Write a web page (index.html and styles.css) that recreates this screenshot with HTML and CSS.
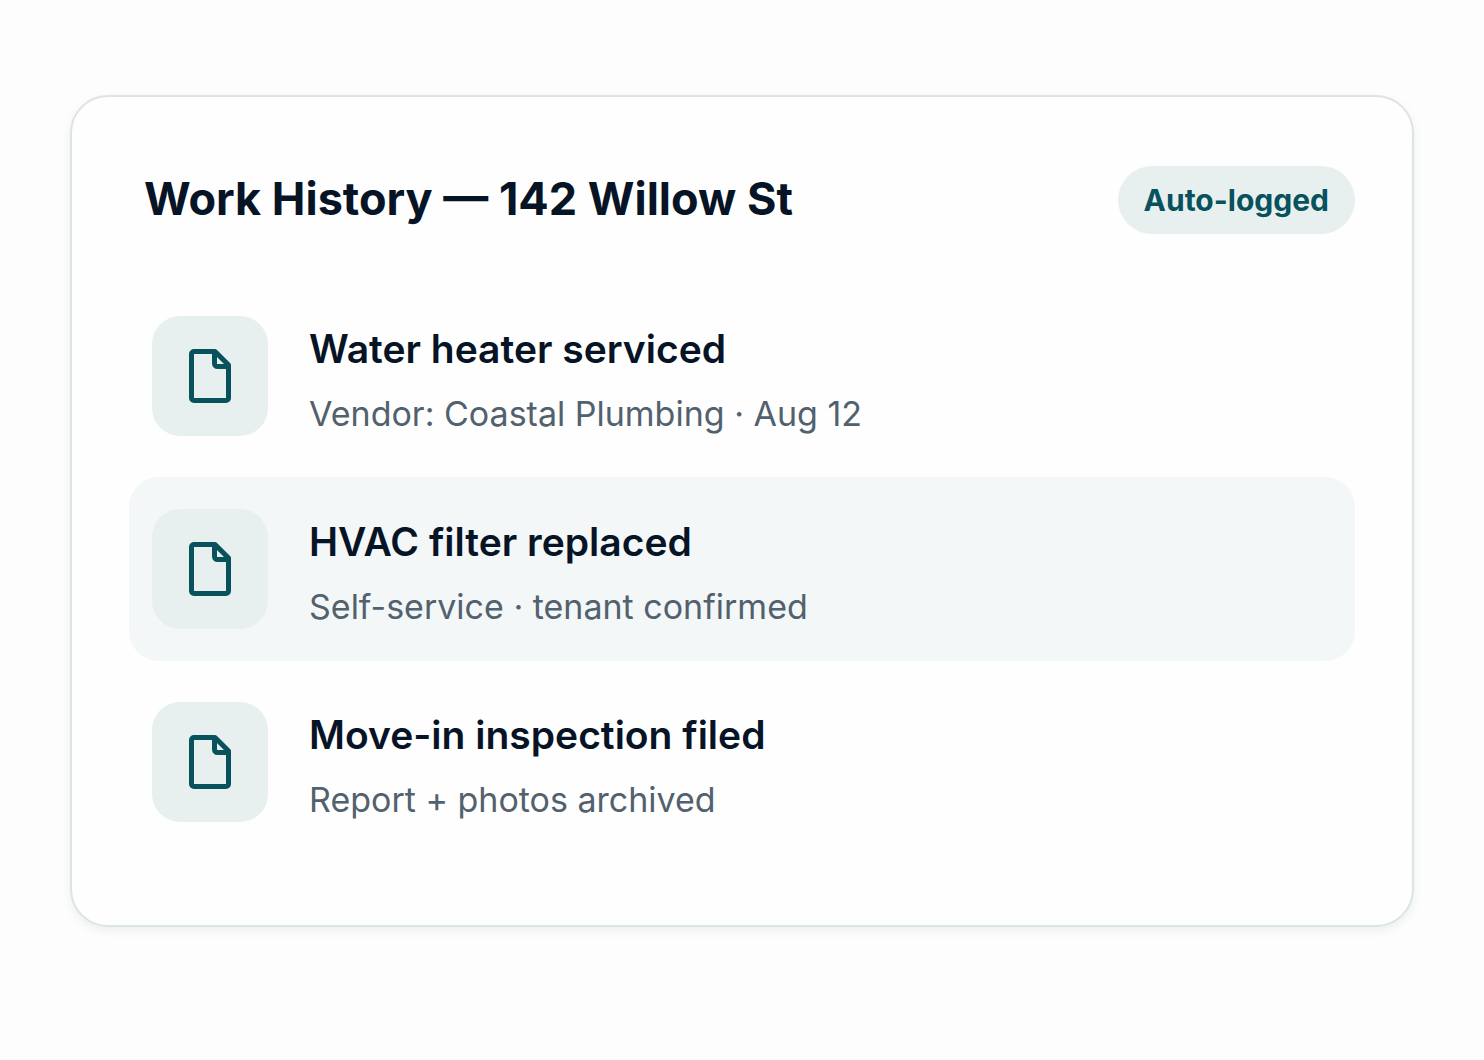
FILE: index.html
```html
<!DOCTYPE html>
<html lang="en">

<head>
    <meta charset="UTF-8">
    <meta name="viewport" content="width=device-width, initial-scale=1.0">
    <title>Work History</title>
    <link rel="stylesheet" href="styles.css">
</head>

<body>
    <!-- shared file icon -->
    <svg class="sprite" aria-hidden="true">
        <symbol id="icon-file" viewBox="0 0 42 54">
            <path d="M5 2.500H26L39.500 16V49A2.500 2.500 0 0 1 37 51.500H5A2.500 2.500 0 0 1 2.500 49V5A2.500 2.500 0 0 1 5 2.500Z" />
            <path d="M25.500 3V14.500A3 3 0 0 0 28.500 17.500H39" />
        </symbol>
    </svg>

    <main class="card">
        <header class="card-header">
            <h1 class="card-title">Work History — 142 Willow St</h1>
            <span class="badge">Auto-logged</span>
        </header>
        <ul class="history">
            <li class="history-item">
                <span class="history-icon"><svg><use href="#icon-file" /></svg></span>
                <div class="history-text">
                    <h2>Water heater serviced</h2>
                    <p>Vendor: Coastal Plumbing · Aug 12</p>
                </div>
            </li>
            <li class="history-item active">
                <span class="history-icon"><svg><use href="#icon-file" /></svg></span>
                <div class="history-text">
                    <h2>HVAC filter replaced</h2>
                    <p>Self-service · tenant confirmed</p>
                </div>
            </li>
            <li class="history-item">
                <span class="history-icon"><svg><use href="#icon-file" /></svg></span>
                <div class="history-text">
                    <h2>Move-in inspection filed</h2>
                    <p>Report + photos archived</p>
                </div>
            </li>
        </ul>
    </main>
</body>

</html>
```

FILE: styles.css
```css
* {
    box-sizing: border-box;
}

body,
h1,
h2,
p,
ul {
    margin: 0;
    padding: 0;
}

body {
    padding: 95px 70px;
    background: #fdfdfd;
    font-family: Inter, "Liberation Sans", sans-serif;
    color: #071426;
}

.sprite {
    display: none;
}

.card {
    padding: 69px 57px 71px;
    background: #fefefe;
    border: 2px solid #dde4e4;
    border-radius: 38px;
    box-shadow: 0 4px 10px rgba(20, 60, 70, 0.07);
}

.card-header {
    display: flex;
    justify-content: space-between;
    align-items: center;
    padding-left: 15px;
    margin-bottom: 50px;
}

.card-title {
    padding-bottom: 2px;
    font-size: 45px;
    line-height: 56px;
    font-weight: 700;
}

.badge {
    padding: 14px 26px;
    border-radius: 34px;
    background: #e8f0ef;
    color: #07525d;
    font-size: 30px;
    line-height: 40px;
    font-weight: 700;
}

.history {
    list-style: none;
    display: flex;
    flex-direction: column;
    gap: 9px;
}

.history-item {
    display: flex;
    align-items: center;
    gap: 41px;
    padding: 32px 23px;
    border-radius: 30px;
}

.history-item.active {
    background: #f3f7f8;
}

.history-icon {
    display: flex;
    align-items: center;
    justify-content: center;
    width: 116px;
    height: 120px;
    border-radius: 28px;
    background: #e8f0ef;
}

.history-icon svg {
    width: 42px;
    height: 54px;
    fill: none;
    stroke: #07525d;
    stroke-width: 5;
    stroke-linejoin: round;
}

.history-text {
    padding-top: 8px;
}

.history-text h2 {
    margin-bottom: 18px;
    font-size: 39px;
    line-height: 50px;
    font-weight: 600;
}

.history-text p {
    color: #52616e;
    font-size: 34px;
    line-height: 44px;
}
```
